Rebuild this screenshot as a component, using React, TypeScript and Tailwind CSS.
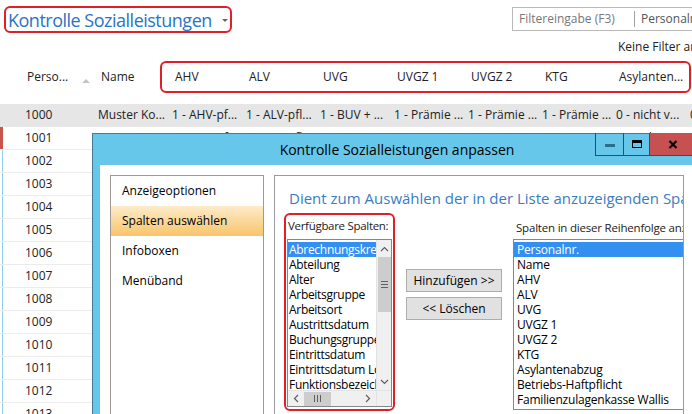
import React from 'react';

const rows = ['1000', '1001', '1002', '1003', '1004', '1005', '1006', '1007', '1008', '1009', '1010', '1011', '1012', '1013'];

const rowCells = ['1 - AHV-pf...', '1 - ALV-pfl...', '1 - BUV + ...', '1 - Prämie ...', '1 - Prämie ...', '1 - Prämie ...', '0 - nicht v...'];

const headers = ['AHV', 'ALV', 'UVG', 'UVGZ 1', 'UVGZ 2', 'KTG', 'Asylanten...'];

const available = [
  'Abrechnungskreis',
  'Abteilung',
  'Alter',
  'Arbeitsgruppe',
  'Arbeitsort',
  'Austrittsdatum',
  'Buchungsgruppe',
  'Eintrittsdatum',
  'Eintrittsdatum Lohn',
  'Funktionsbezeichnung',
];

const chosen = [
  'Personalnr.',
  'Name',
  'AHV',
  'ALV',
  'UVG',
  'UVGZ 1',
  'UVGZ 2',
  'KTG',
  'Asylantenabzug',
  'Betriebs-Haftpflicht',
  'Familienzulagenkasse Wallis',
];

const NavItem: React.FC<{ label: string; active?: boolean }> = ({ label, active }) => (
  <div
    className={`h-[30px] flex items-center pl-[11px] text-[12px] text-black ${
      active ? 'bg-gradient-to-b from-[#fdebc8] to-[#f8c469]' : ''
    }`}
  >
    {label}
  </div>
);

const AvailableList: React.FC = () => (
  <div className="ml-[1px] mt-[2px] w-[105px] h-[168px] border border-[#828790] bg-white flex flex-col">
    <div className="flex flex-1 min-h-0">
      <div className="w-[89px] pt-[2px] overflow-hidden">
        {available.map((item, i) => (
          <div
            key={item}
            className={`h-[15px] leading-[15px] text-[12px] tracking-[-0.3px] pl-[1px] whitespace-nowrap ${
              i === 0 ? 'bg-[#3390f0] text-white' : 'text-black'
            }`}
          >
            {item}
          </div>
        ))}
      </div>
      {/* vertical scrollbar */}
      <div className="w-[15px] bg-[#f0f0f0] border-l border-[#e3e3e3] flex flex-col items-center">
        <div className="h-[17px] flex items-center justify-center">
          <svg width="9" height="6" viewBox="0 0 9 6">
            <path d="M1 5 L4.5 1.5 L8 5" fill="none" stroke="#606060" strokeWidth="1.2" />
          </svg>
        </div>
        <div className="w-[13px] h-[55px] bg-[#cdcdcd] flex flex-col items-center justify-center gap-[2px]">
          <div className="w-[7px] h-[1px] bg-[#606060]" />
          <div className="w-[7px] h-[1px] bg-[#606060]" />
          <div className="w-[7px] h-[1px] bg-[#606060]" />
        </div>
        <div className="flex-1" />
        <div className="h-[17px] flex items-center justify-center">
          <svg width="9" height="6" viewBox="0 0 9 6">
            <path d="M1 1 L4.5 4.5 L8 1" fill="none" stroke="#606060" strokeWidth="1.2" />
          </svg>
        </div>
      </div>
    </div>
    {/* horizontal scrollbar */}
    <div className="h-[16px] flex border-t border-[#e3e3e3]">
      <div className="w-[89px] bg-[#f0f0f0] flex items-center">
        <div className="w-[16px] flex items-center justify-center">
          <svg width="6" height="9" viewBox="0 0 6 9">
            <path d="M5 1 L1.5 4.5 L5 8" fill="none" stroke="#606060" strokeWidth="1.2" />
          </svg>
        </div>
        <div className="w-[27px] h-[14px] bg-[#cdcdcd] flex items-center justify-center gap-[2px]">
          <div className="w-[1px] h-[7px] bg-[#606060]" />
          <div className="w-[1px] h-[7px] bg-[#606060]" />
          <div className="w-[1px] h-[7px] bg-[#606060]" />
        </div>
        <div className="flex-1" />
        <div className="w-[16px] flex items-center justify-center">
          <svg width="6" height="9" viewBox="0 0 6 9">
            <path d="M1 1 L4.5 4.5 L1 8" fill="none" stroke="#606060" strokeWidth="1.2" />
          </svg>
        </div>
      </div>
      <div className="w-[15px] bg-[#f0f0f0] border-l border-[#e3e3e3]" />
    </div>
  </div>
);

const Dialog: React.FC = () => (
  <div className="absolute left-[92px] top-[133px] w-[610px] h-[300px] bg-[#66c7ea] border border-[#3f7d99] flex flex-col">
    <div className="h-[31px] relative flex items-center justify-center text-[14px] text-black">
      Kontrolle Sozialleistungen anpassen
      <div className="absolute top-[-1px] left-[502px] flex h-[23px] border border-[#2f4f5e] border-t-0">
        <div className="w-[28px] flex items-center justify-center border-r border-[#2f4f5e]">
          <div className="w-[10px] h-[3px] bg-[#2c6f8a] mt-[3px]" />
        </div>
        <div className="w-[26px] flex items-center justify-center border-r border-[#2f4f5e]">
          <div className="w-[10px] h-[8px] border border-black border-t-[3px]" />
        </div>
        <div className="w-[45px] bg-[#c75050] flex items-center justify-center">
          <svg width="10" height="9" viewBox="0 0 10 9">
            <path d="M1.5 1 L8.5 8 M8.5 1 L1.5 8" stroke="black" strokeWidth="2.2" />
          </svg>
        </div>
      </div>
    </div>
    <div className="flex-1 mx-[7px] bg-white flex gap-[10px] pl-[10px] pt-[10px]">
      {/* left navigation */}
      <div className="w-[154px] border border-[#9a9a9a]">
        <NavItem label="Anzeigeoptionen" />
        <NavItem label="Spalten auswählen" active />
        <NavItem label="Infoboxen" />
        <NavItem label="Menüband" />
      </div>
      {/* right panel */}
      <div className="w-[410px] border border-[#9a9a9a] overflow-hidden pl-[14px] pt-[12px]">
        <div className="h-[20px] leading-[20px] text-[15px] text-[#3a7cc2] whitespace-nowrap">
          Dient zum Auswählen der in der Liste anzuzeigenden Spalten.
        </div>
        <div className="flex mt-[5px] -ml-[5px]">
          <div className="w-[111px] h-[198px] border-2 border-[#e01f28] rounded-[6px] shrink-0">
            <div className="h-[22px] flex items-center pl-[2px] text-[11.5px] tracking-[-0.3px] text-[#222] whitespace-nowrap overflow-hidden">
              Verfügbare Spalten:
            </div>
            <AvailableList />
          </div>
          <div className="ml-[11px] mt-[56px] flex flex-col gap-[5px] shrink-0">
            <div className="w-[96px] h-[23px] bg-[#e1e1e1] border border-[#adadad] flex items-center justify-center text-[12px] text-black">
              Hinzufügen &gt;&gt;
            </div>
            <div className="w-[96px] h-[23px] bg-[#e1e1e1] border border-[#adadad] flex items-center justify-center text-[12px] text-black">
              &lt;&lt; Löschen
            </div>
          </div>
          <div className="ml-[11px] shrink-0">
            <div className="h-[26px] flex items-center pl-[3px] pt-[4px] text-[11.5px] tracking-[-0.2px] text-[#222] whitespace-nowrap">
              Spalten in dieser Reihenfolge anzeigen:
            </div>
            <div className="w-[200px] h-[171px] border border-[#828790] pt-[2px]">
              {chosen.map((item, i) => (
                <div
                  key={item}
                  className={`h-[15px] leading-[15px] text-[12px] tracking-[-0.2px] pl-[3px] whitespace-nowrap ${
                    i === 0 ? 'bg-[#3390f0] text-white' : 'text-black'
                  }`}
                >
                  {item}
                </div>
              ))}
            </div>
          </div>
        </div>
      </div>
    </div>
  </div>
);

export default function App() {
  return (
    <div className="relative w-[692px] h-[414px] overflow-hidden bg-white font-['Open_Sans','Noto_Sans',sans-serif] text-[#222]">
      {/* top bar */}
      <div className="h-[38px] flex items-start">
        <div className="ml-[4px] mt-[6px] w-[228px] h-[27px] border-2 border-[#e01f28] rounded-[6px] flex items-center pl-[2px] shrink-0">
          <span className="text-[18px] tracking-[-0.5px] text-[#2a74c4] leading-none whitespace-nowrap">
            Kontrolle Sozialleistungen
          </span>
          <span className="ml-[10px] mt-[2px] w-0 h-0 border-l-[3px] border-r-[3px] border-t-[3px] border-l-transparent border-r-transparent border-t-[#666]" />
        </div>
        <div className="ml-[280px] mt-[7px] w-[200px] h-[24px] border border-[#b9b9b9] flex items-center shrink-0 text-[12px]">
          <span className="pl-[6px] w-[121px] text-[#777]">Filtereingabe (F3)</span>
          <span className="w-[1px] h-[16px] bg-[#a0a0a0]" />
          <span className="pl-[6px] text-[#555] whitespace-nowrap">Personalnr.</span>
        </div>
      </div>
      <div className="h-[18px] flex items-center pl-[618px] text-[12px] text-[#222] whitespace-nowrap">
        Keine Filter angewendet
      </div>
      {/* header row */}
      <div className="relative h-[42px] flex items-center text-[12px] text-[#222]">
        <div className="w-[3px]" />
        <div className="w-[92px] pl-[24px] flex items-center shrink-0">
          <span>Perso...</span>
          <span className="ml-[14px] mt-[8px] w-0 h-0 border-l-[4px] border-r-[4px] border-b-[4px] border-l-transparent border-r-transparent border-b-[#c4c4c4]" />
        </div>
        <div className="w-[75px] pl-[6px] shrink-0">Name</div>
        {headers.map((h) => (
          <div key={h} className="w-[74px] pl-[5px] shrink-0 whitespace-nowrap">
            {h}
          </div>
        ))}
        <div className="absolute left-[160px] top-[5px] w-[531px] h-[32px] border-2 border-[#e01f28] rounded-[6px]" />
      </div>
      <div className="h-[6px]" />
      {/* data rows */}
      <div className="flex flex-col">
        {rows.map((nr, idx) => (
          <div
            key={nr}
            className={`h-[23px] flex items-center text-[12px] text-[#222] whitespace-nowrap border-b ${
              idx === 0 ? 'bg-[#e6e6e6] border-[#e6e6e6]' : 'border-[#ececec]'
            }`}
          >
            <div
              className={`w-[3px] h-full shrink-0 ${
                idx === 1 ? 'bg-[#c5574f]' : idx > 1 ? 'border-r border-[#8fd0ea]' : ''
              }`}
            />
            <div className="w-[92px] pl-[22px] shrink-0">{nr}</div>
            <div className="w-[75px] pl-[3px] shrink-0">{idx === 0 ? 'Muster Ko...' : 'Muster Ka...'}</div>
            {rowCells.map((c, i) => (
              <div key={i} className="w-[74px] pl-[2px] shrink-0 overflow-hidden">
                {c}
              </div>
            ))}
            <div className="pl-[2px] shrink-0">0</div>
          </div>
        ))}
      </div>
      <Dialog />
    </div>
  );
}
